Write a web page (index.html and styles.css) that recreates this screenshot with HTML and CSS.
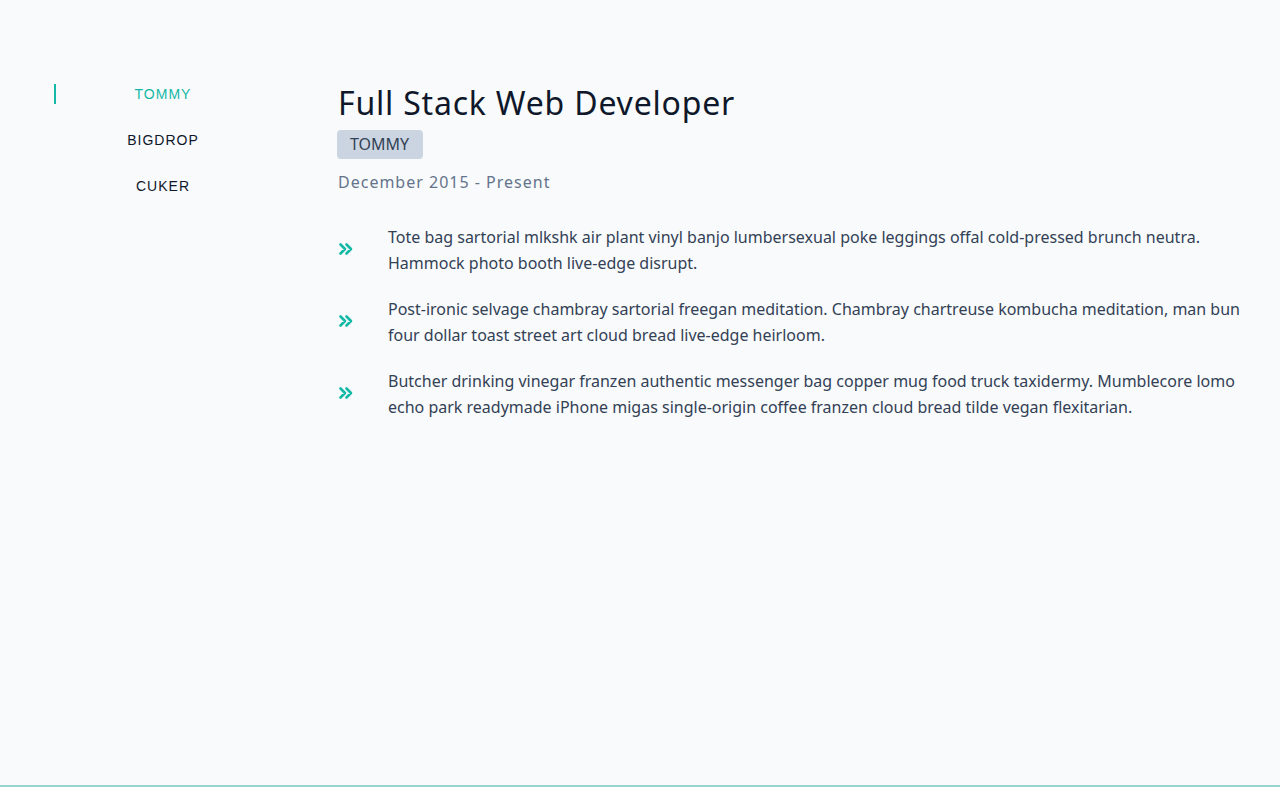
FILE: index.html
```html
<!DOCTYPE html>
<html lang="en">
<head>
<meta charset="utf-8">
<title>Experience</title>
<link rel="stylesheet" href="styles.css">
</head>
<body>
<div class="page">
  <main class="experience">
    <nav class="tabs">
      <a class="tab active">TOMMY</a>
      <a class="tab">BIGDROP</a>
      <a class="tab">CUKER</a>
    </nav>
    <section class="job">
      <h1 class="job-title">Full Stack Web Developer</h1>
      <span class="badge">TOMMY</span>
      <p class="date">December 2015 - Present</p>
      <ul class="duties">
        <li class="duty">
          <svg class="chev" viewBox="0 0 16 16" width="16" height="16"><path d="M2.5 3.5 L7 8 L2.5 12.5 M8.5 3.5 L13 8 L8.5 12.5" fill="none" stroke="currentColor" stroke-width="2.6" stroke-linecap="round" stroke-linejoin="round"/></svg>
          <p>Tote bag sartorial mlkshk air plant vinyl banjo lumbersexual poke leggings offal cold-pressed brunch neutra. Hammock photo booth live-edge disrupt.</p>
        </li>
        <li class="duty">
          <svg class="chev" viewBox="0 0 16 16" width="16" height="16"><path d="M2.5 3.5 L7 8 L2.5 12.5 M8.5 3.5 L13 8 L8.5 12.5" fill="none" stroke="currentColor" stroke-width="2.6" stroke-linecap="round" stroke-linejoin="round"/></svg>
          <p>Post-ironic selvage chambray sartorial freegan meditation. Chambray chartreuse kombucha meditation, man bun four dollar toast street art cloud bread live-edge heirloom.</p>
        </li>
        <li class="duty">
          <svg class="chev" viewBox="0 0 16 16" width="16" height="16"><path d="M2.5 3.5 L7 8 L2.5 12.5 M8.5 3.5 L13 8 L8.5 12.5" fill="none" stroke="currentColor" stroke-width="2.6" stroke-linecap="round" stroke-linejoin="round"/></svg>
          <p>Butcher drinking vinegar franzen authentic messenger bag copper mug food truck taxidermy. Mumblecore lomo echo park readymade iPhone migas single-origin coffee franzen cloud bread tilde vegan flexitarian.</p>
        </li>
      </ul>
    </section>
  </main>
  <div class="bottom-line"></div>
</div>
</body>
</html>
```
FILE: styles.css
```css
* { box-sizing: border-box; }
html, body { margin: 0; padding: 0; }
body {
  background: #f8fafc;
  font-family: "Noto Sans", "Open Sans", sans-serif;
  color: #334155;
}
.page {
  min-height: 787px;
  display: flex;
  flex-direction: column;
}
.experience {
  flex: 1;
  display: flex;
  padding: 84px 32px 0 54px;
}
.tabs {
  width: 216px;
  flex-shrink: 0;
  display: flex;
  flex-direction: column;
  gap: 26px;
  margin-right: 68px;
}
.tab {
  display: block;
  height: 20px;
  line-height: 20px;
  text-align: center;
  font-family: "Liberation Sans", Arial, sans-serif;
  font-size: 14px;
  letter-spacing: 1px;
  color: #0f172a;
  border-left: 2px solid transparent;
  cursor: pointer;
}
.tab.active {
  color: #14b8a6;
  border-left-color: #14b8a6;
}
.job { flex: 1; }
.job-title {
  margin: 0;
  font-size: 32px;
  font-weight: 400;
  line-height: 37px;
  letter-spacing: 0.8px;
  color: #0f172a;
}
.badge {
  display: inline-block;
  margin-top: 9px;
  margin-left: -1px;
  padding: 0 14px 0 13px;
  height: 29px;
  line-height: 29px;
  background: #cbd5e1;
  border-radius: 4px;
  font-size: 16px;
  color: #334155;
}
.date {
  margin: 11px 0 0;
  font-size: 16px;
  line-height: 24px;
  letter-spacing: 1px;
  color: #64748b;
}
.duties {
  list-style: none;
  margin: 30px 0 0;
  padding: 0;
  display: flex;
  flex-direction: column;
  gap: 20px;
}
.duty {
  display: flex;
  align-items: center;
}
.chev {
  flex-shrink: 0;
  color: #14b8a6;
  width: 16px;
  height: 16px;
  margin-right: 34px;
  margin-bottom: 3px;
}
.duty p {
  margin: 0;
  font-size: 16px;
  line-height: 26px;
  color: #334155;
}
.bottom-line {
  height: 2px;
  background: #99d5cf;
}
```
